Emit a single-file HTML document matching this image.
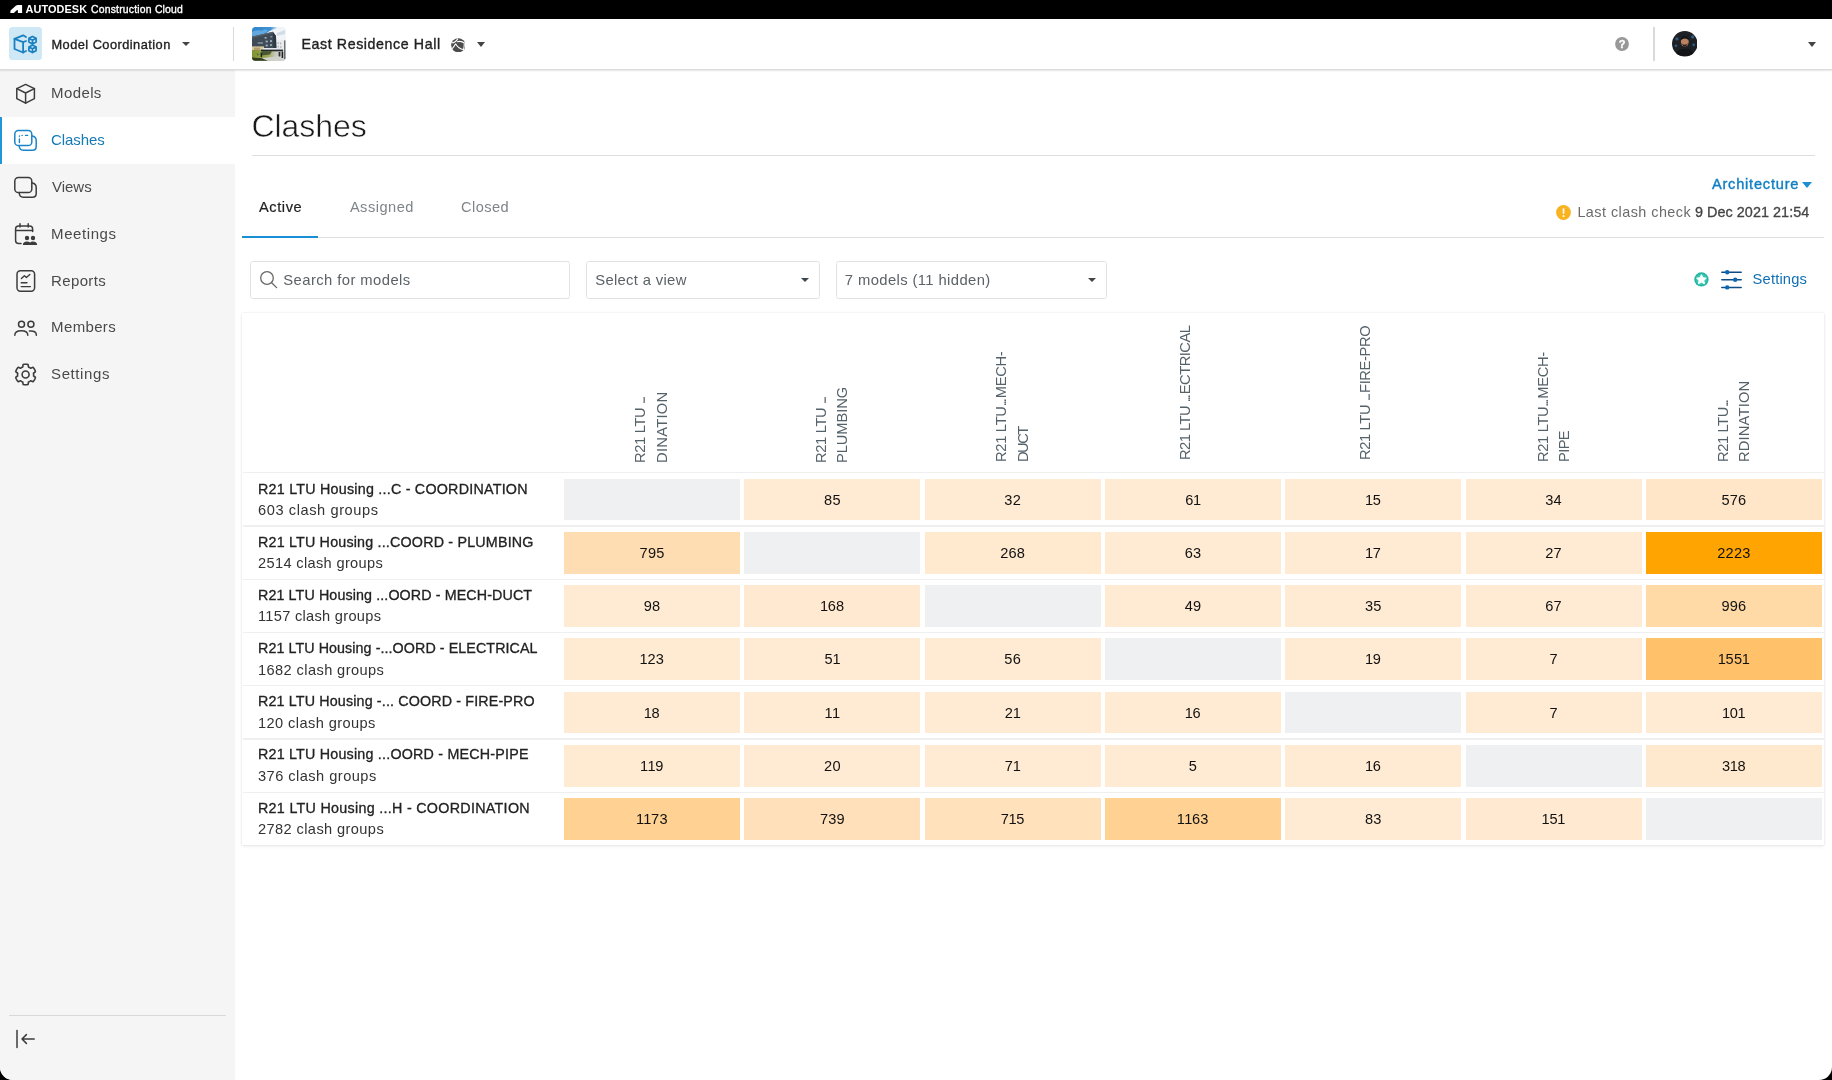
<!DOCTYPE html>
<html lang="en">
<head>
<meta charset="utf-8">
<title>Clashes - Model Coordination</title>
<style>
*{box-sizing:border-box;margin:0;padding:0}
html,body{width:1832px;height:1080px;overflow:hidden;background:#000}
body{font-family:"Liberation Sans",Arial,sans-serif;color:#222;position:relative}
#app{will-change:transform;position:absolute;left:0;top:0;width:1832px;height:1080px;background:#fff;border-radius:0 0 13px 13px;overflow:hidden}
.abs{position:absolute}
.t{position:absolute;white-space:nowrap;line-height:1}
#topbar{position:absolute;left:0;top:0;width:1832px;height:19px;background:#000;z-index:2}
#header{position:absolute;left:0;top:18px;width:1832px;height:52px;background:#fff;border-bottom:1px solid #dcdcdc;box-shadow:0 1px 1.5px rgba(0,0,0,.10);z-index:1}
#side{position:absolute;left:0;top:70px;width:234.5px;height:1010px;background:#f5f5f5}
.nav{position:absolute;left:0;width:235px;height:47px}
.nav .t{left:52px;top:15px;font-size:15px;color:#4a4a4a;letter-spacing:.2px}
.nav svg{position:absolute}
.nav.on{background:#fff}
.nav.on:before{content:"";position:absolute;left:0;top:0;width:2px;height:47px;background:#2196d9}
.nav.on .t{color:#1579b5}
.vh{position:absolute;white-space:nowrap;transform-origin:0 0;transform:rotate(-90deg);font-size:14.7px;line-height:1;color:#56626a;letter-spacing:.3px}
.d3{letter-spacing:-2.1px;margin-right:2.1px}
.rt{font-size:14.3px;color:#222;letter-spacing:.42px;-webkit-text-stroke:.3px #222}
.rs{font-size:14.6px;color:#333;letter-spacing:.35px}
.o{margin:0 -.5px}
.c{position:absolute;width:176.2px;height:41.8px;line-height:43px;text-align:center;font-size:14.6px;color:#111;letter-spacing:.2px}
</style>
</head>
<body>
<div id="app">
<div id="topbar">
<svg class="abs" style="left:0px;top:0px" width="24" height="18" viewBox="0 0 24 18"><path d="M10.3 12.9 L10.5 10.5 L15.8 5.8 Q16.8 5 18 5 L22.1 5 L22.1 12.9 L17.9 12.9 L17.9 10.1 Q16.4 10.3 15.4 11.4 L13.9 12.9 Z" fill="#fff"/></svg>
<div class="t" id="tb1" style="left: 25.5px; top: 4.26px; font-size: 10.9px; font-weight: bold; color: rgb(255, 255, 255); letter-spacing: 0.084px;">AUTODESK</div>
<div class="t" id="tb2" style="left: 91px; top: 5.26px; font-size: 10.4px; color: rgb(255, 255, 255); letter-spacing: 0.206px; -webkit-text-stroke: 0.35px rgb(255, 255, 255);">Construction Cloud</div>
</div>
<div id="header">
<div class="abs" style="left:9.1px;top:9.1px;width:32.8px;height:33.4px;border-radius:3.5px;background:#cfe8f5"></div>
<svg class="abs" style="left:9px;top:9px" width="33" height="34" viewBox="0 0 33 34" fill="none" stroke="#1b80c2" stroke-width="1.8" stroke-linejoin="round" stroke-linecap="round">
<path d="M17 10 L14.1 8.3 L5.5 11.8 L5.5 22 L14.1 25.5 L17 24"/><path d="M5.5 11.8 L14.1 15.1 L17 14 M14.1 15.1 L14.1 25.5"/>
<g stroke-width="1.7"><path d="M23.5 9.4 L27.1 11.3 L27.1 15.1 L23.5 17 L19.9 15.1 L19.9 11.3 Z M19.9 11.3 L23.5 13.2 L27.1 11.3 M23.5 13.2 L23.5 17"/>
<path d="M23.5 18 L27.1 19.9 L27.1 23.7 L23.5 25.6 L19.9 23.7 L19.9 19.9 Z M19.9 19.9 L23.5 21.8 L27.1 19.9 M23.5 21.8 L23.5 25.6"/></g>
</svg>
<div class="t" id="h1" style="left: 51.5px; top: 20.68px; font-size: 12.8px; color: rgb(34, 34, 34); letter-spacing: 0.459px; -webkit-text-stroke: 0.35px rgb(34, 34, 34);">Model Coordination</div>
<div class="abs" style="left:182px;top:24.3px;border-left:4.2px solid transparent;border-right:4.2px solid transparent;border-top:4.8px solid #444"></div>
<div class="abs" style="left:232.5px;top:9px;width:1.5px;height:34.4px;background:#dadada"></div>
<svg class="abs" style="left:251.5px;top:8.9px" width="34" height="34" viewBox="0 0 34 34">
<defs><clipPath id="tc"><rect x="0" y="0" width="33.8" height="33.8" rx="3.6"/></clipPath>
<linearGradient id="sk" x1="0" y1="0" x2="1" y2="0"><stop offset="0" stop-color="#2f86cc"/><stop offset=".55" stop-color="#3f93d6"/><stop offset=".75" stop-color="#e9f1f8"/><stop offset="1" stop-color="#f4f6f8"/></linearGradient>
<linearGradient id="gr" x1="0" y1="0" x2="1" y2="0"><stop offset="0" stop-color="#7f9433"/><stop offset=".45" stop-color="#9aa64e"/><stop offset=".7" stop-color="#c9cbbf"/><stop offset="1" stop-color="#d9dbd6"/></linearGradient></defs>
<g clip-path="url(#tc)">
<rect width="34" height="34" fill="#eef1f4"/>
<rect width="34" height="12" fill="url(#sk)"/>
<path d="M0 5 Q6 2 10 4 Q13 1.5 16 3.5 L12 7 L0 9.5 Z" fill="#6fb0e2" opacity=".8"/>
<path d="M14 6.5 Q20 1 34 0 L34 14 L24 12 Z" fill="#f2f5f8"/>
<path d="M25 6 L33 3 L33 7 L25 9 Z" fill="#c9d6e2" opacity=".8"/>
<path d="M0 9.6 L20.8 4.8 L24 9 L24.4 22 L0 20 Z" fill="#3f4b56"/>
<path d="M20.8 4.8 L24 9 L24.4 22 L21.6 21.6 Z" fill="#2e3842"/>
<path d="M0 9.6 L20.8 4.8 L21 6 L0 11 Z" fill="#55636f"/>
<g fill="#9fb0bd"><rect x="12.6" y="10" width="2" height="1.6"/><rect x="13.6" y="13.6" width="2.2" height="1.8"/><rect x="18" y="13.2" width="2" height="1.8"/><rect x="13.6" y="17.6" width="2.2" height="1.8"/><rect x="18" y="17.2" width="2" height="1.6"/><rect x="5.6" y="15.2" width="5.4" height="1.6" opacity=".7"/><rect x="18.4" y="9" width="1.8" height="1.4" opacity=".7"/></g>
<rect x="25.4" y="13" width="8.6" height="11" fill="#e9ecee"/>
<g fill="#aeb6bd"><rect x="25.6" y="15" width="1.2" height="2"/><rect x="28" y="15.4" width="1.2" height="2"/><rect x="25.6" y="18.6" width="1.2" height="2"/><rect x="28.2" y="19" width="1.2" height="2"/></g>
<rect x="0" y="19.4" width="12" height="4" fill="#d6c89a"/>
<rect x="2" y="20.6" width="6" height="2.4" fill="#b79a72"/>
<rect x="0" y="23" width="34" height="11" fill="url(#gr)"/>
<rect x="10.6" y="21" width="18" height="1.6" fill="#e4e7ea"/>
<rect x="9" y="22.6" width="22" height="1.7" fill="#23282c"/>
<path d="M10 24.3 L20 24.3 L18 27.4 L9 28.6 Z" fill="#3c4a2e" opacity=".85"/>
<path d="M10 31 L30 29 L34 30 L34 34 L6 34 Z" fill="#cfd1cc"/>
<path d="M0 30.5 L10 31.2 L16 34 L0 34 Z" fill="#2f3a1f"/>
<rect x="8.6" y="25.6" width="1.5" height="4.6" rx=".6" fill="#1d2225"/>
<rect x="26.6" y="25" width="1.8" height="4.4" rx=".6" fill="#2a2f3a"/>
<rect x="29.6" y="24.4" width="1.6" height="6.6" rx=".6" fill="#1f2427"/>
<rect x="32.3" y="13.4" width="1.1" height="18.6" fill="#3a3f44"/>
<rect x="5" y="26.6" width="1.4" height="1.6" fill="#4f5f2a"/>
</g></svg>
<div class="t" id="h2" style="left: 301.5px; top: 19.49px; font-size: 14.2px; color: rgb(34, 34, 34); letter-spacing: 0.6px; -webkit-text-stroke: 0.35px rgb(34, 34, 34);">East Residence Hall</div>
<svg class="abs" style="left:450.7px;top:19.9px" width="14.6" height="14.6" viewBox="0 0 14 14"><circle cx="7" cy="7" r="6.8" fill="#4d4d4d"/><path d="M.6 4.6 Q4.2 4.6 6.6 .6 M1.2 10.2 Q3.2 8 4.4 5.6 M4.4 5.6 Q7 10.6 12.4 11.2 M5.8 3.6 Q10 2.4 13.2 5 M12.6 4.6 Q13 8 12 11" stroke="#fff" stroke-width="1.05" fill="none"/></svg>
<div class="abs" style="left:476.8px;top:24px;border-left:4.4px solid transparent;border-right:4.4px solid transparent;border-top:5px solid #444"></div>
<svg class="abs" style="left:1614.9px;top:19px" width="14" height="14" viewBox="0 0 14 14"><circle cx="7" cy="7" r="6.9" fill="#989898"/><text x="7" y="10.9" font-size="11" font-weight="bold" fill="#fff" stroke="#fff" stroke-width=".4" text-anchor="middle" font-family="Liberation Sans, sans-serif">?</text></svg>
<div class="abs" style="left:1653.4px;top:9px;width:1.5px;height:34.4px;background:#dadada"></div>
<svg class="abs" style="left:1671.7px;top:13.4px" width="25.6" height="25.6" viewBox="0 0 26 26">
<defs><clipPath id="ac"><circle cx="13" cy="13" r="13"/></clipPath></defs>
<g clip-path="url(#ac)"><rect width="26" height="26" fill="#1d2126"/>
<circle cx="5" cy="8" r="1.6" fill="#2f5d86"/><circle cx="21" cy="6" r="1.6" fill="#2f5d86"/><circle cx="22" cy="14" r="1.4" fill="#2f5d86"/><circle cx="4" cy="15" r="1.3" fill="#2f5d86"/>
<ellipse cx="13" cy="11" rx="4" ry="4.8" fill="#b98362"/><path d="M8.8 9.5 Q9 4.8 13 4.8 Q17 4.8 17.2 9.5 Q15 7.6 13 7.6 Q11 7.6 8.8 9.5Z" fill="#15171a"/>
<path d="M9.3 12 Q13 19.5 16.7 12 Q15.5 14 13 14 Q10.5 14 9.3 12Z" fill="#2a1d16"/>
<path d="M3 26 Q4 18 13 18 Q22 18 23 26 Z" fill="#121417"/></g></svg>
<div class="abs" style="left:1808.3px;top:24.2px;border-left:4.4px solid transparent;border-right:4.4px solid transparent;border-top:5px solid #444"></div>
</div>
<div id="side">
<div class="nav" style="top:0px"><svg style="left:15px;top:13px" width="22" height="22" viewBox="0 0 22 22" fill="none" stroke="#3c3c3c" stroke-width="1.5" stroke-linejoin="round" stroke-linecap="round"><path d="M10.6 1.4 L19.4 5.6 L19.4 15.6 L10.6 20.2 L1.8 15.6 L1.8 5.6 Z"/><path d="M1.8 5.6 L10.6 10 L19.4 5.6 M10.6 10 L10.6 20.2"/></svg><div class="t" id="n1" style="letter-spacing: 0.38px; left: 51.1px; top: 14.5px;">Models</div></div>
<div class="nav on" style="top:47px"><svg style="left:13px;top:12px" width="26" height="24" viewBox="0 0 26 24" fill="none" stroke="#1a85c8" stroke-width="1.5" stroke-linecap="round" stroke-linejoin="round"><rect x="1.8" y="1.6" width="17" height="15" rx="3.6"/><path d="M19.2 7 Q23.2 7.6 23.2 11.4 L23.2 17.4 Q23.2 21.2 19.4 21.2 L10.2 21.2 Q6.6 21.2 6.2 17"/><path d="M6.4 10 L6.4 13.6 M6.4 7 L6.4 7.2 M9 6.4 L9.2 6.4 M12.6 6.4 L14.6 6.4" stroke-width="1.4"/></svg><div class="t" id="n2" style="letter-spacing: -0.1px; left: 51.1px; top: 14.6px;">Clashes</div></div>
<div class="nav" style="top:94px"><svg style="left:13px;top:12px" width="26" height="24" viewBox="0 0 26 24" fill="none" stroke="#3c3c3c" stroke-width="1.5" stroke-linecap="round" stroke-linejoin="round"><rect x="1.8" y="1.6" width="17" height="15" rx="3.6"/><path d="M19.2 7 Q23.2 7.6 23.2 11.4 L23.2 17.4 Q23.2 21.2 19.4 21.2 L10.2 21.2 Q6.6 21.2 6.2 17"/></svg><div class="t" id="n3" style="letter-spacing: -0.025px; left: 52px; top: 15.41px;">Views</div></div>
<div class="nav" style="top:141px"><svg style="left:13px;top:11px" width="26" height="26" viewBox="0 0 26 26" fill="none" stroke="#3c3c3c" stroke-width="1.5" stroke-linecap="round" stroke-linejoin="round"><path d="M8 21.4 L5.6 21.4 Q2.6 21.4 2.6 18.4 L2.6 6.8 Q2.6 4 5.6 4 L16.6 4 Q19.6 4 19.6 6.8 L19.6 9.6"/><path d="M2.6 8.4 L19.6 8.4 M7 1.8 L7 5 M15.2 1.8 L15.2 5"/><g fill="#3c3c3c" stroke="none"><circle cx="14" cy="16" r="2.2"/><circle cx="20" cy="16" r="2.2"/><path d="M9.8 23 Q10 19.4 14 19.4 Q16 19.4 17 20.6 Q18 19.4 20 19.4 Q24 19.4 24.2 23 Z"/></g></svg><div class="t" id="n4" style="letter-spacing: 0.581px; left: 51.1px; top: 15px;">Meetings</div></div>
<div class="nav" style="top:188px"><svg style="left:15px;top:11.2px" width="22" height="24" viewBox="0 0 22 24" fill="none" stroke="#3c3c3c" stroke-width="1.5" stroke-linecap="round" stroke-linejoin="round"><rect x="2" y="1.8" width="17.6" height="20.4" rx="3.4"/><path d="M6.2 17.6 L15.4 17.6 M6.2 13.8 L12 13.8 M6.4 9.6 L9.4 6.8 L11.4 8.4 L14.8 5.4" stroke-width="1.4"/></svg><div class="t" id="n5" style="letter-spacing: 0.35px; left: 51.1px; top: 15px;">Reports</div></div>
<div class="nav" style="top:234px"><svg style="left:13px;top:13px" width="26" height="20" viewBox="0 0 26 20" fill="none" stroke="#3c3c3c" stroke-width="1.5" stroke-linecap="round" stroke-linejoin="round"><circle cx="8.5" cy="7.2" r="3"/><circle cx="17.9" cy="7.2" r="3"/><path d="M1.8 18.2 Q1.8 13.8 8.3 13.8 Q14.8 13.8 14.8 18.2 M16.4 14 Q23.4 13.4 23.4 18.2"/></svg><div class="t" id="n6" style="letter-spacing: 0.35px; left: 51.1px; top: 14.6px;">Members</div></div>
<div class="nav" style="top:281px"><svg style="left:13px;top:11px" width="26" height="26" viewBox="0 0 26 26" fill="none" stroke="#3c3c3c" stroke-width="1.6" stroke-linecap="round" stroke-linejoin="round"><circle cx="12.6" cy="12.5" r="3.5"/><path d="M15.09 2.51 L13.86 2.28 L12.60 2.20 L11.34 2.28 L10.11 2.51 L9.73 5.03 L9.16 5.28 L8.60 5.57 L8.07 5.91 L7.57 6.28 L5.19 5.35 L4.37 6.30 L3.68 7.35 L3.12 8.48 L2.70 9.66 L4.70 11.25 L4.62 11.87 L4.60 12.50 L4.62 13.13 L4.70 13.75 L2.70 15.34 L3.12 16.52 L3.68 17.65 L4.37 18.70 L5.19 19.65 L7.57 18.72 L8.07 19.09 L8.60 19.43 L9.16 19.72 L9.73 19.97 L10.11 22.49 L11.34 22.72 L12.60 22.80 L13.86 22.72 L15.09 22.49 L15.47 19.97 L16.04 19.72 L16.60 19.43 L17.13 19.09 L17.63 18.72 L20.01 19.65 L20.83 18.70 L21.52 17.65 L22.08 16.52 L22.50 15.34 L20.50 13.75 L20.58 13.13 L20.60 12.50 L20.58 11.87 L20.50 11.25 L22.50 9.66 L22.08 8.48 L21.52 7.35 L20.83 6.30 L20.01 5.35 L17.63 6.28 L17.13 5.91 L16.60 5.57 L16.04 5.28 L15.47 5.03 Z"/></svg><div class="t" id="n7" style="letter-spacing: 0.586px; left: 51.1px; top: 14.6px;">Settings</div></div>
<div class="abs" style="left:9px;top:945px;width:217px;height:1px;background:#d9d9d9"></div>
<svg class="abs" style="left:14px;top:958px" width="24" height="22" viewBox="0 0 24 22" fill="none" stroke="#3c3c3c" stroke-width="1.5" stroke-linecap="round" stroke-linejoin="round"><path d="M3 2.4 L3 19.6"/><path d="M20.2 11 L8 11 M12.4 6.6 L8 11 L12.4 15.4"/></svg>
</div>
<div id="main">
<div class="t" id="title" style="left: 251.4px; top: 110.32px; font-size: 32px; color: rgb(26, 26, 26); letter-spacing: -0.05px; -webkit-text-stroke: 0.55px rgb(255, 255, 255);">Clashes</div>
<div class="abs" style="left:252px;top:155px;width:1563px;height:1.4px;background:#dcdfe1"></div>
<div class="t" id="tab1" style="left: 258.9px; top: 200.44px; font-size: 14.6px; color: rgb(34, 34, 34); letter-spacing: 0.61px; -webkit-text-stroke: 0.2px rgb(34, 34, 34);">Active</div>
<div class="t" id="tab2" style="left: 349.9px; top: 200.44px; font-size: 14.6px; color: rgb(125, 133, 137); letter-spacing: 0.495px;">Assigned</div>
<div class="t" id="tab3" style="left: 461px; top: 200.44px; font-size: 14.6px; color: rgb(125, 133, 137); letter-spacing: 0.43px;">Closed</div>
<div class="abs" style="left:242px;top:236.8px;width:1582px;height:1.2px;background:#dde1e4"></div>
<div class="abs" style="left:242px;top:235.5px;width:76px;height:2.5px;background:#1a8fd6"></div>
<div class="t" id="arch" style="left: 1711.9px; top: 177.05px; font-size: 14.6px; color: rgb(16, 127, 196); letter-spacing: 0.785px; -webkit-text-stroke: 0.4px rgb(16, 127, 196);">Architecture</div>
<div class="abs" style="left:1802.3px;top:181.6px;border-left:5.5px solid transparent;border-right:5.5px solid transparent;border-top:6.4px solid #1a8fd6"></div>
<svg class="abs" style="left:1556.4px;top:204.6px" width="15" height="15" viewBox="0 0 15 15"><circle cx="7.5" cy="7.5" r="7.4" fill="#f9b31f"/><rect x="6.7" y="3.2" width="1.7" height="5.6" rx=".6" fill="#fff"/><circle cx="7.55" cy="11" r="1.05" fill="#fff"/></svg>
<div class="t" id="lcc1" style="left: 1577.4px; top: 205.12px; font-size: 14.4px; color: rgb(107, 107, 107); letter-spacing: 0.46px;">Last clash check</div>
<div class="t" id="lcc2" style="left: 1695px; top: 205.12px; font-size: 14.4px; color: rgb(68, 68, 68); letter-spacing: 0.04px; -webkit-text-stroke: 0.3px rgb(68, 68, 68);">9 Dec 2021 21:54</div>

<div class="abs" style="left:250.3px;top:261.1px;width:319.4px;height:37.6px;border:1.6px solid #e0e3e5;border-radius:2.5px;background:#fff"></div>
<svg class="abs" style="left:258.6px;top:270px" width="20" height="20" viewBox="0 0 20 20" fill="none" stroke="#666" stroke-width="1.3" stroke-linecap="round"><circle cx="8" cy="8" r="6.3"/><path d="M12.7 12.7 L17.6 17.6"/></svg>
<div class="t" id="f1" style="left: 283.3px; top: 273.08px; font-size: 14.8px; color: rgb(91, 98, 102); letter-spacing: 0.423px;">Search for models</div>
<div class="abs" style="left:585.7px;top:261.1px;width:234.1px;height:37.6px;border:1.6px solid #e0e3e5;border-radius:2.5px;background:#fff"></div>
<div class="t" id="f2" style="left: 595.2px; top: 273.08px; font-size: 14.8px; color: rgb(91, 98, 102); letter-spacing: 0.33px;">Select a view</div>
<div class="abs" style="left:800.8px;top:277.6px;border-left:4.1px solid transparent;border-right:4.1px solid transparent;border-top:4.6px solid #3c4650"></div>
<div class="abs" style="left:835.8px;top:261.1px;width:271.3px;height:37.6px;border:1.6px solid #e0e3e5;border-radius:2.5px;background:#fff"></div>
<div class="t" id="f3" style="left: 844.8px; top: 273.08px; font-size: 14.8px; color: rgb(91, 98, 102); letter-spacing: 0.394px;">7 models (11 hidden)</div>
<div class="abs" style="left:1088.2px;top:277.6px;border-left:4.1px solid transparent;border-right:4.1px solid transparent;border-top:4.8px solid #444"></div>

<svg class="abs" style="left:1693.6px;top:272.2px" width="15" height="15" viewBox="0 0 15 15"><circle cx="7.45" cy="7.45" r="7.15" fill="#22b5a2"/><circle cx="7.45" cy="7.45" r="5.6" fill="#38c7b4"/><path d="M7.45 2.7 L8.95 5.7 L12.3 6.15 L9.85 8.45 L10.45 11.8 L7.45 10.2 L4.45 11.8 L5.05 8.45 L2.6 6.15 L5.95 5.7 Z" fill="#fff" stroke="#fff" stroke-width="1" stroke-linejoin="round"/></svg>
<svg class="abs" style="left:1720px;top:268px" width="23" height="23" viewBox="0 0 23 23" fill="none" stroke="#0f4c84" stroke-width="1.5" stroke-linecap="round"><path d="M1.8 4.3 L21.2 4.3 M1.8 11.7 L21.2 11.7 M1.8 19.4 L21.2 19.4"/><g fill="#0d68b4" stroke="none"><circle cx="7.2" cy="4.3" r="2.2"/><circle cx="15.2" cy="11.7" r="2.2"/><circle cx="7.2" cy="19.4" r="2.2"/></g></svg>
<div class="t" id="sett" style="left: 1752.6px; top: 272.07px; font-size: 14.7px; color: rgb(15, 111, 179); letter-spacing: 0.175px;">Settings</div>

<div id="tbl" class="abs" style="left:242px;top:313.2px;width:1582.2px;height:531.8px;background:#fff;box-shadow:0 0 2px rgba(0,0,0,.13),0 2px 3px rgba(0,0,0,.05)"></div>
<div class="vh" id="vh0a" style="left: 633.32px; top: 462.7px; letter-spacing: -0.33px;">R21 LTU <span class="d3">...</span></div>
<div class="vh" id="vh0b" style="left: 654.52px; top: 462.7px; letter-spacing: 0.297px;">DINATION</div>
<div class="vh" id="vh1a" style="left: 813.72px; top: 462.7px; letter-spacing: -0.33px;">R21 LTU <span class="d3">...</span></div>
<div class="vh" id="vh1b" style="left: 834.82px; top: 462.7px; letter-spacing: -0.08px;">PLUMBING</div>
<div class="vh" id="vh2a" style="left: 994.32px; top: 461.8px; letter-spacing: -0.289px;">R21 LTU<span class="d3">...</span>MECH-</div>
<div class="vh" id="vh2b" style="left: 1015.62px; top: 461.8px; letter-spacing: -1.5px;">DUCT</div>
<div class="vh" id="vh3a" style="left: 1177.82px; top: 460.3px; letter-spacing: -0.5px;">R21 LTU <span class="d3">...</span>ECTRICAL</div>
<div class="vh" id="vh4a" style="left: 1358.42px; top: 460.3px; letter-spacing: -0.35px;">R21 LTU <span class="d3">...</span>FIRE-PRO</div>
<div class="vh" id="vh5a" style="left: 1535.52px; top: 461.8px; letter-spacing: -0.343px;">R21 LTU<span class="d3">...</span>MECH-</div>
<div class="vh" id="vh5b" style="left: 1556.52px; top: 461.8px; letter-spacing: -0.6px;">PIPE</div>
<div class="vh" id="vh6a" style="left: 1715.72px; top: 461.8px; letter-spacing: -0.4px;">R21 LTU<span class="d3">...</span></div>
<div class="vh" id="vh6b" style="left: 1737.22px; top: 461.8px; letter-spacing: 0.176px;">RDINATION</div>
<div class="abs" style="left:242.5px;top:472.2px;width:1581px;height:1.3px;background:#efefef"></div>
<div class="t rt" id="rt0" style="left: 258px; top: 482.4px; letter-spacing: 0.233px;">R21 LTU Housing ...C - COORDINATION</div>
<div class="t rs" id="rs0" style="left: 258px; top: 503.4px; letter-spacing: 0.59px;">603 clash groups</div>
<div class="c" style="left:564.0px;top:478.6px;background:#eff0f2"></div>
<div class="c" style="left:744.3px;top:478.6px;background:#ffebd3">85</div>
<div class="c" style="left:924.6px;top:478.6px;background:#ffebd3">32</div>
<div class="c" style="left:1104.9px;top:478.6px;background:#ffebd3">6<span class="o">1</span></div>
<div class="c" style="left:1285.2px;top:478.6px;background:#ffebd3"><span class="o">1</span>5</div>
<div class="c" style="left:1465.5px;top:478.6px;background:#ffebd3">34</div>
<div class="c" style="left:1645.8px;top:478.6px;background:#ffe6c9">576</div>
<div class="abs" style="left:242.5px;top:525.4px;width:1581px;height:1.3px;background:#efefef"></div>
<div class="t rt" id="rt1" style="left: 258px; top: 534.6px; letter-spacing: 0.188px;">R21 LTU Housing ...COORD - PLUMBING</div>
<div class="t rs" id="rs1" style="left: 258px; top: 555.6px; letter-spacing: 0.344px;">2514 clash groups</div>
<div class="c" style="left:564.0px;top:531.8px;background:#ffddb3">795</div>
<div class="c" style="left:744.3px;top:531.8px;background:#eff0f2"></div>
<div class="c" style="left:924.6px;top:531.8px;background:#ffe9cf">268</div>
<div class="c" style="left:1104.9px;top:531.8px;background:#ffebd3">63</div>
<div class="c" style="left:1285.2px;top:531.8px;background:#ffebd3"><span class="o">1</span>7</div>
<div class="c" style="left:1465.5px;top:531.8px;background:#ffebd3">27</div>
<div class="c" style="left:1645.8px;top:531.8px;background:#ffa400">2223</div>
<div class="abs" style="left:242.5px;top:578.7px;width:1581px;height:1.3px;background:#efefef"></div>
<div class="t rt" id="rt2" style="left: 258px; top: 587.9px; letter-spacing: 0.102px;">R21 LTU Housing ...OORD - MECH-DUCT</div>
<div class="t rs" id="rs2" style="left: 258px; top: 608.9px; letter-spacing: 0.299px;">1157 clash groups</div>
<div class="c" style="left:564.0px;top:585.1px;background:#ffebd3">98</div>
<div class="c" style="left:744.3px;top:585.1px;background:#ffead1"><span class="o">1</span>68</div>
<div class="c" style="left:924.6px;top:585.1px;background:#eff0f2"></div>
<div class="c" style="left:1104.9px;top:585.1px;background:#ffebd3">49</div>
<div class="c" style="left:1285.2px;top:585.1px;background:#ffebd3">35</div>
<div class="c" style="left:1465.5px;top:585.1px;background:#ffebd3">67</div>
<div class="c" style="left:1645.8px;top:585.1px;background:#ffd9a6">996</div>
<div class="abs" style="left:242.5px;top:631.9px;width:1581px;height:1.3px;background:#efefef"></div>
<div class="t rt" id="rt3" style="left: 258px; top: 641.1px; letter-spacing: 0.07px;">R21 LTU Housing -...OORD - ELECTRICAL</div>
<div class="t rs" id="rs3" style="left: 258px; top: 663.1px; letter-spacing: 0.406px;">1682 clash groups</div>
<div class="c" style="left:564.0px;top:638.3px;background:#ffebd2"><span class="o">1</span>23</div>
<div class="c" style="left:744.3px;top:638.3px;background:#ffebd3">5<span class="o">1</span></div>
<div class="c" style="left:924.6px;top:638.3px;background:#ffebd3">56</div>
<div class="c" style="left:1104.9px;top:638.3px;background:#eff0f2"></div>
<div class="c" style="left:1285.2px;top:638.3px;background:#ffebd3"><span class="o">1</span>9</div>
<div class="c" style="left:1465.5px;top:638.3px;background:#ffebd3">7</div>
<div class="c" style="left:1645.8px;top:638.3px;background:#ffc26b"><span class="o">1</span>55<span class="o">1</span></div>
<div class="abs" style="left:242.5px;top:685.1px;width:1581px;height:1.3px;background:#efefef"></div>
<div class="t rt" id="rt4" style="left: 258px; top: 694.3px; letter-spacing: 0.145px;">R21 LTU Housing -... COORD - FIRE-PRO</div>
<div class="t rs" id="rs4" style="left: 258px; top: 716.3px; letter-spacing: 0.41px;">120 clash groups</div>
<div class="c" style="left:564.0px;top:691.5px;background:#ffebd3"><span class="o">1</span>8</div>
<div class="c" style="left:744.3px;top:691.5px;background:#ffebd3"><span class="o">1</span><span class="o">1</span></div>
<div class="c" style="left:924.6px;top:691.5px;background:#ffebd3">2<span class="o">1</span></div>
<div class="c" style="left:1104.9px;top:691.5px;background:#ffebd3"><span class="o">1</span>6</div>
<div class="c" style="left:1285.2px;top:691.5px;background:#eff0f2"></div>
<div class="c" style="left:1465.5px;top:691.5px;background:#ffebd3">7</div>
<div class="c" style="left:1645.8px;top:691.5px;background:#ffebd3"><span class="o">1</span>0<span class="o">1</span></div>
<div class="abs" style="left:242.5px;top:738.4px;width:1581px;height:1.3px;background:#efefef"></div>
<div class="t rt" id="rt5" style="left: 258px; top: 746.6px; letter-spacing: 0.206px;">R21 LTU Housing ...OORD - MECH-PIPE</div>
<div class="t rs" id="rs5" style="left: 258px; top: 768.6px; letter-spacing: 0.47px;">376 clash groups</div>
<div class="c" style="left:564.0px;top:744.8px;background:#ffebd2"><span class="o">1</span><span class="o">1</span>9</div>
<div class="c" style="left:744.3px;top:744.8px;background:#ffebd3">20</div>
<div class="c" style="left:924.6px;top:744.8px;background:#ffebd3">7<span class="o">1</span></div>
<div class="c" style="left:1104.9px;top:744.8px;background:#ffebd3">5</div>
<div class="c" style="left:1285.2px;top:744.8px;background:#ffebd3"><span class="o">1</span>6</div>
<div class="c" style="left:1465.5px;top:744.8px;background:#eff0f2"></div>
<div class="c" style="left:1645.8px;top:744.8px;background:#ffe9ce">3<span class="o">1</span>8</div>
<div class="abs" style="left:242.5px;top:791.6px;width:1581px;height:1.3px;background:#efefef"></div>
<div class="t rt" id="rt6" style="left: 258px; top: 800.8px; letter-spacing: 0.294px;">R21 LTU Housing ...H - COORDINATION</div>
<div class="t rs" id="rs6" style="left: 258px; top: 821.8px; letter-spacing: 0.401px;">2782 clash groups</div>
<div class="c" style="left:564.0px;top:798.0px;background:#ffd192"><span class="o">1</span><span class="o">1</span>73</div>
<div class="c" style="left:744.3px;top:798.0px;background:#ffe0ba">739</div>
<div class="c" style="left:924.6px;top:798.0px;background:#ffe1bc">7<span class="o">1</span>5</div>
<div class="c" style="left:1104.9px;top:798.0px;background:#ffd294"><span class="o">1</span><span class="o">1</span>63</div>
<div class="c" style="left:1285.2px;top:798.0px;background:#ffebd3">83</div>
<div class="c" style="left:1465.5px;top:798.0px;background:#ffead1"><span class="o">1</span>5<span class="o">1</span></div>
<div class="c" style="left:1645.8px;top:798.0px;background:#eff0f2"></div>
</div>
</div>
</body>
</html>
